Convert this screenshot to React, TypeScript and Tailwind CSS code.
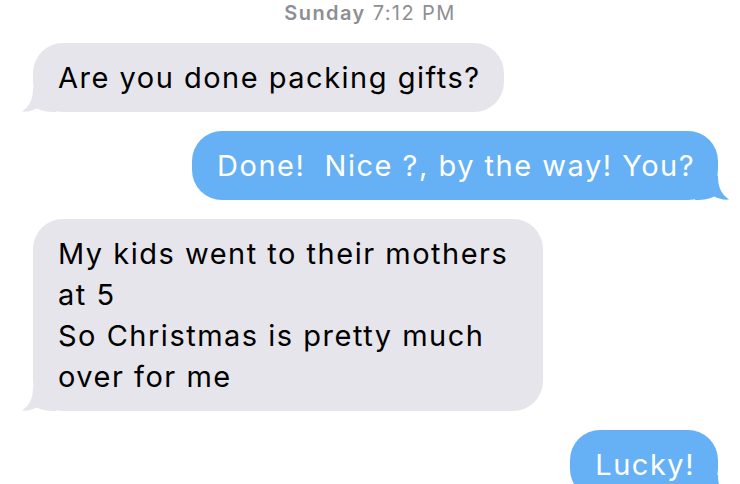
import React from "react";

type Side = "in" | "out";

function Tail({ side }: { side: Side }) {
  const fill = side === "in" ? "#e6e5eb" : "#66b1f5";
  return (
    <svg
      className={
        "absolute bottom-0 " + (side === "in" ? "left-[-11px]" : "right-[-11px] -scale-x-100")
      }
      width="34"
      height="24"
      viewBox="0 0 34 24"
    >
      <path
        d="M11 0 C11 11 8 18 0 23.5 C5 24 10 23 15 20.5 C19 22.5 24 24 34 24 L34 0 Z"
        fill={fill}
      />
    </svg>
  );
}

function Bubble({ side, lines, wide }: { side: Side; lines: string[]; wide?: boolean }) {
  const incoming = side === "in";
  return (
    <div className={incoming ? "flex justify-start pl-[33px]" : "flex justify-end pr-[22px]"}>
      <div
        className={
          "relative rounded-[30px] pl-[25px] pr-[23px] py-[14px] text-[29px] leading-[41px] tracking-[1.5px] whitespace-pre " +
          (wide ? "w-[510px] " : "") +
          (incoming ? "bg-[#e6e5eb] text-black" : "bg-[#66b1f5] text-white")
        }
      >
        <Tail side={side} />
        <div className="relative">
          {lines.map((l, i) => (
            <div key={i}>{l}</div>
          ))}
        </div>
      </div>
    </div>
  );
}

export default function App() {
  return (
    <div className="h-[484px] w-[740px] overflow-hidden bg-white font-['Inter',sans-serif]">
      <div className="pt-[1px] text-center text-[20px] leading-[24px] tracking-[1.4px] text-[#8e8e93]">
        <span className="font-semibold">Sunday</span> 7:12 PM
      </div>
      <div className="mt-[18px] flex flex-col gap-[19px]">
        <Bubble side="in" lines={["Are you done packing gifts?"]} />
        <Bubble side="out" lines={["Done!  Nice ?, by the way! You?"]} />
        <Bubble
          side="in"
          wide
          lines={[
            "My kids went to their mothers",
            "at 5",
            "So Christmas is pretty much",
            "over for me",
          ]}
        />
        <Bubble side="out" lines={["Lucky!"]} />
      </div>
    </div>
  );
}
